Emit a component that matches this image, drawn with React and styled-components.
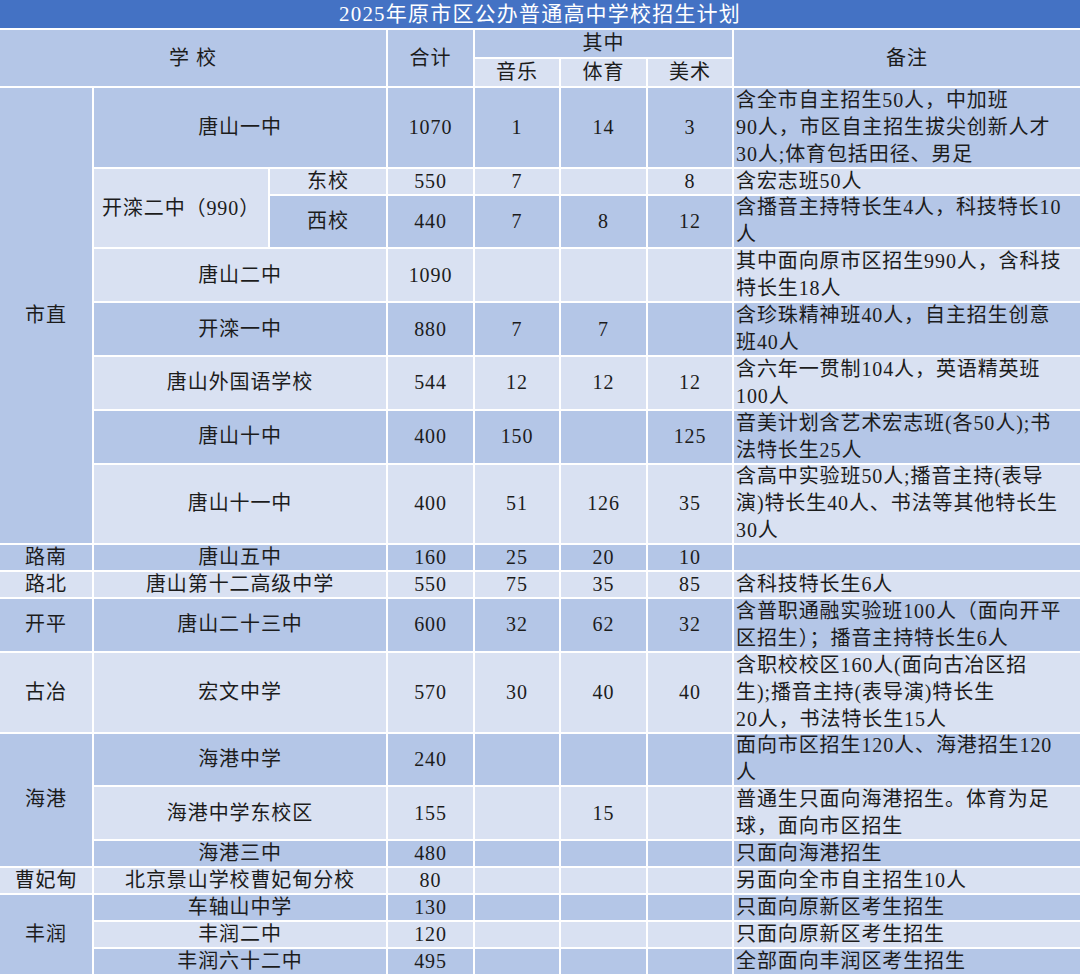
import React from 'react';
import styled, { createGlobalStyle } from 'styled-components';

const Global = createGlobalStyle`
  html, body { margin: 0; padding: 0; background: #ffffff; }
  body {
    font-family: "Liberation Serif", "Noto Sans CJK SC", serif;
    color: #1c1c1c;
  }
`;

const DARK = '#b4c6e7';
const LIGHT = '#d9e1f2';

const Page = styled.div`
  width: 1080px;
  background: #ffffff;
`;

const TitleBar = styled.div`
  height: 28px;
  margin-bottom: 2px;
  background: #4472c4;
  color: #ffffff;
  font-size: 21px;
  letter-spacing: 1.2px;
  line-height: 28px;
  text-align: center;
`;

const Grid = styled.div`
  display: grid;
  grid-template-columns: 92px 174px 116px 85px 84px 85px 84px 1fr;
  grid-template-rows: ${(p) => p.$rows};
  gap: 2px;
  background: #ffffff;
`;

const Cell = styled.div`
  grid-column: ${(p) => p.$c};
  grid-row: ${(p) => p.$r};
  background: ${(p) => (p.$tone === 'light' ? LIGHT : DARK)};
  display: flex;
  align-items: center;
  justify-content: center;
  text-align: center;
  font-size: 20px;
  letter-spacing: 0.9px;
  line-height: 27px;
  white-space: nowrap;
  overflow: visible;
`;

const HeadCell = styled(Cell)`
  letter-spacing: 1px;
`;

const NoteCell = styled(Cell)`
  flex-direction: column;
  align-items: flex-start;
  justify-content: center;
  text-align: left;
  padding-left: 2px;
`;

const NoteLine = styled.span`
  display: block;
`;

const districts = [
  { name: '市直', r: '3 / span 8', tone: 'dark' },
  { name: '路南', r: '11', tone: 'dark' },
  { name: '路北', r: '12', tone: 'light' },
  { name: '开平', r: '13', tone: 'dark' },
  { name: '古冶', r: '14', tone: 'light' },
  { name: '海港', r: '15 / span 3', tone: 'dark' },
  { name: '曹妃甸', r: '18', tone: 'light' },
  { name: '丰润', r: '19 / span 3', tone: 'dark' },
];

const schools = [
  { lines: 3, name: '唐山一中', total: '1070', m: '1', s: '14', a: '3', tone: 'dark',
    note: ['含全市自主招生50人，中加班', '90人，市区自主招生拔尖创新人才', '30人;体育包括田径、男足'] },
  { lines: 1, sub: '东校', total: '550', m: '7', a: '8', tone: 'light', note: ['含宏志班50人'] },
  { lines: 2, sub: '西校', total: '440', m: '7', s: '8', a: '12', tone: 'dark',
    note: ['含播音主持特长生4人，科技特长10', '人'] },
  { lines: 2, name: '唐山二中', total: '1090', tone: 'light',
    note: ['其中面向原市区招生990人，含科技', '特长生18人'] },
  { lines: 2, name: '开滦一中', total: '880', m: '7', s: '7', tone: 'dark',
    note: ['含珍珠精神班40人，自主招生创意', '班40人'] },
  { lines: 2, name: '唐山外国语学校', total: '544', m: '12', s: '12', a: '12', tone: 'light',
    note: ['含六年一贯制104人，英语精英班', '100人'] },
  { lines: 2, name: '唐山十中', total: '400', m: '150', a: '125', tone: 'dark',
    note: ['音美计划含艺术宏志班(各50人);书', '法特长生25人'] },
  { lines: 3, name: '唐山十一中', total: '400', m: '51', s: '126', a: '35', tone: 'light',
    note: ['含高中实验班50人;播音主持(表导', '演)特长生40人、书法等其他特长生', '30人'] },
  { lines: 1, name: '唐山五中', total: '160', m: '25', s: '20', a: '10', tone: 'dark', note: [] },
  { lines: 1, name: '唐山第十二高级中学', total: '550', m: '75', s: '35', a: '85', tone: 'light',
    note: ['含科技特长生6人'] },
  { lines: 2, name: '唐山二十三中', total: '600', m: '32', s: '62', a: '32', tone: 'dark',
    note: ['含普职通融实验班100人（面向开平', '区招生）；播音主持特长生6人'] },
  { lines: 3, name: '宏文中学', total: '570', m: '30', s: '40', a: '40', tone: 'light',
    note: ['含职校校区160人(面向古冶区招', '生);播音主持(表导演)特长生', '20人，书法特长生15人'] },
  { lines: 2, name: '海港中学', total: '240', tone: 'dark',
    note: ['面向市区招生120人、海港招生120', '人'] },
  { lines: 2, name: '海港中学东校区', total: '155', s: '15', tone: 'light',
    note: ['普通生只面向海港招生。体育为足', '球，面向市区招生'] },
  { lines: 1, name: '海港三中', total: '480', tone: 'dark', note: ['只面向海港招生'] },
  { lines: 1, name: '北京景山学校曹妃甸分校', total: '80', tone: 'light', note: ['另面向全市自主招生10人'] },
  { lines: 1, name: '车轴山中学', total: '130', tone: 'dark', note: ['只面向原新区考生招生'] },
  { lines: 1, name: '丰润二中', total: '120', tone: 'light', note: ['只面向原新区考生招生'] },
  { lines: 1, name: '丰润六十二中', total: '495', tone: 'dark', note: ['全部面向丰润区考生招生'] },
];

const rowTracks = [
  '27px',
  '27px',
  ...schools.map((s) => `${(26.9 * s.lines - 2).toFixed(2)}px`),
].join(' ');

export default function App() {
  return (
    <Page>
      <Global />
      <TitleBar>2025年原市区公办普通高中学校招生计划</TitleBar>
      <Grid $rows={rowTracks}>
        <HeadCell $c="1 / span 3" $r="1 / span 2" $tone="dark">学 校</HeadCell>
        <HeadCell $c="4" $r="1 / span 2" $tone="dark">合计</HeadCell>
        <HeadCell $c="5 / span 3" $r="1" $tone="dark">其中</HeadCell>
        <HeadCell $c="5" $r="2" $tone="light">音乐</HeadCell>
        <HeadCell $c="6" $r="2" $tone="light">体育</HeadCell>
        <HeadCell $c="7" $r="2" $tone="light">美术</HeadCell>
        <HeadCell $c="8" $r="1 / span 2" $tone="dark">备注</HeadCell>

        {districts.map((d) => (
          <Cell key={d.name} $c="1" $r={d.r} $tone={d.tone}>{d.name}</Cell>
        ))}

        <Cell $c="2" $r="4 / span 2" $tone="light">开滦二中（990）</Cell>

        {schools.map((s, i) => {
          const r = String(i + 3);
          return (
            <React.Fragment key={r}>
              {s.sub ? (
                <Cell $c="3" $r={r} $tone={s.tone}>{s.sub}</Cell>
              ) : (
                <Cell $c="2 / span 2" $r={r} $tone={s.tone}>{s.name}</Cell>
              )}
              <Cell $c="4" $r={r} $tone={s.tone}>{s.total}</Cell>
              <Cell $c="5" $r={r} $tone={s.tone}>{s.m || ''}</Cell>
              <Cell $c="6" $r={r} $tone={s.tone}>{s.s || ''}</Cell>
              <Cell $c="7" $r={r} $tone={s.tone}>{s.a || ''}</Cell>
              <NoteCell $c="8" $r={r} $tone={s.tone}>
                {s.note.map((line, j) => (
                  <NoteLine key={j}>{line}</NoteLine>
                ))}
              </NoteCell>
            </React.Fragment>
          );
        })}
      </Grid>
    </Page>
  );
}
